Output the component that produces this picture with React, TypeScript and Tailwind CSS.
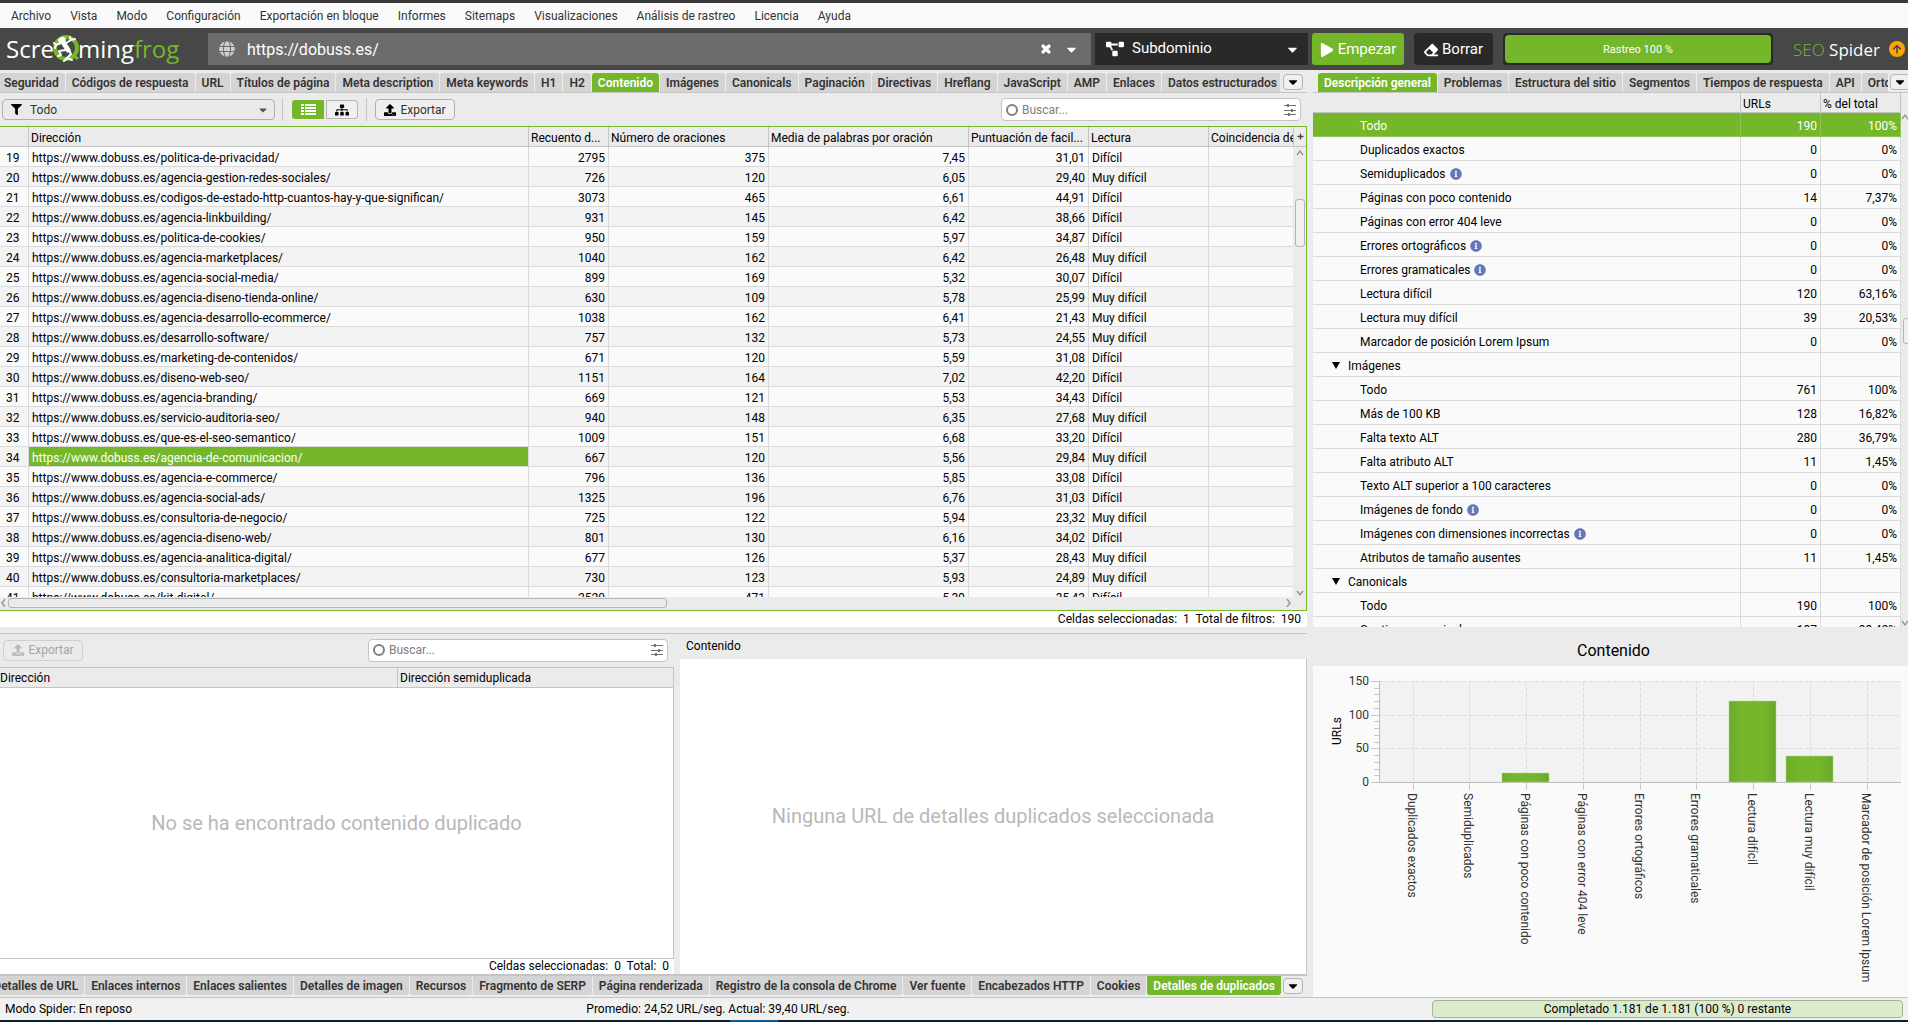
import React from "react";
import {
  FaGlobe,
  FaProjectDiagram,
  FaPlay,
  FaEraser,
  FaFilter,
  FaThList,
  FaSitemap,
  FaUpload,
  FaInfoCircle,
  FaTimes,
  FaCaretDown,
  FaPlus,
  FaArrowUp,
} from "react-icons/fa";

const menus = ["Archivo", "Vista", "Modo", "Configuración", "Exportación en bloque", "Informes", "Sitemaps", "Visualizaciones", "Análisis de rastreo", "Licencia", "Ayuda"];

const mainTabs = ["Seguridad", "Códigos de respuesta", "URL", "Títulos de página", "Meta description", "Meta keywords", "H1", "H2", "Contenido", "Imágenes", "Canonicals", "Paginación", "Directivas", "Hreflang", "JavaScript", "AMP", "Enlaces", "Datos estructurados"];

const sideTabs = ["Descripción general", "Problemas", "Estructura del sitio", "Segmentos", "Tiempos de respuesta", "API", "Ortografía"];

const detailTabs = ["Detalles de URL", "Enlaces internos", "Enlaces salientes", "Detalles de imagen", "Recursos", "Fragmento de SERP", "Página renderizada", "Registro de la consola de Chrome", "Ver fuente", "Encabezados HTTP", "Cookies", "Detalles de duplicados"];

const D = "Difícil";
const M = "Muy difícil";

const pages: [string, string, string, string, string, string][] = [
  ["politica-de-privacidad", "2795", "375", "7,45", "31,01", D],
  ["agencia-gestion-redes-sociales", "726", "120", "6,05", "29,40", M],
  ["codigos-de-estado-http-cuantos-hay-y-que-significan", "3073", "465", "6,61", "44,91", D],
  ["agencia-linkbuilding", "931", "145", "6,42", "38,66", D],
  ["politica-de-cookies", "950", "159", "5,97", "34,87", D],
  ["agencia-marketplaces", "1040", "162", "6,42", "26,48", M],
  ["agencia-social-media", "899", "169", "5,32", "30,07", D],
  ["agencia-diseno-tienda-online", "630", "109", "5,78", "25,99", M],
  ["agencia-desarrollo-ecommerce", "1038", "162", "6,41", "21,43", M],
  ["desarrollo-software", "757", "132", "5,73", "24,55", M],
  ["marketing-de-contenidos", "671", "120", "5,59", "31,08", D],
  ["diseno-web-seo", "1151", "164", "7,02", "42,20", D],
  ["agencia-branding", "669", "121", "5,53", "34,43", D],
  ["servicio-auditoria-seo", "940", "148", "6,35", "27,68", M],
  ["que-es-el-seo-semantico", "1009", "151", "6,68", "33,20", D],
  ["agencia-de-comunicacion", "667", "120", "5,56", "29,84", M],
  ["agencia-e-commerce", "796", "136", "5,85", "33,08", D],
  ["agencia-social-ads", "1325", "196", "6,76", "31,03", D],
  ["consultoria-de-negocio", "725", "122", "5,94", "23,32", M],
  ["agencia-diseno-web", "801", "130", "6,16", "34,02", D],
  ["agencia-analitica-digital", "677", "126", "5,37", "28,43", M],
  ["consultoria-marketplaces", "730", "123", "5,93", "24,89", M],
  ["kit-digital", "2520", "471", "5,39", "35,43", D],
];

type Overview = { label: string; urls?: string; pct?: string; info?: boolean; group?: boolean };

const overview: Overview[] = [
  { label: "Todo", urls: "190", pct: "100%" },
  { label: "Duplicados exactos", urls: "0", pct: "0%" },
  { label: "Semiduplicados", urls: "0", pct: "0%", info: true },
  { label: "Páginas con poco contenido", urls: "14", pct: "7,37%" },
  { label: "Páginas con error 404 leve", urls: "0", pct: "0%" },
  { label: "Errores ortográficos", urls: "0", pct: "0%", info: true },
  { label: "Errores gramaticales", urls: "0", pct: "0%", info: true },
  { label: "Lectura difícil", urls: "120", pct: "63,16%" },
  { label: "Lectura muy difícil", urls: "39", pct: "20,53%" },
  { label: "Marcador de posición Lorem Ipsum", urls: "0", pct: "0%" },
  { label: "Imágenes", group: true },
  { label: "Todo", urls: "761", pct: "100%" },
  { label: "Más de 100 KB", urls: "128", pct: "16,82%" },
  { label: "Falta texto ALT", urls: "280", pct: "36,79%" },
  { label: "Falta atributo ALT", urls: "11", pct: "1,45%" },
  { label: "Texto ALT superior a 100 caracteres", urls: "0", pct: "0%" },
  { label: "Imágenes de fondo", urls: "0", pct: "0%", info: true },
  { label: "Imágenes con dimensiones incorrectas", urls: "0", pct: "0%", info: true },
  { label: "Atributos de tamaño ausentes", urls: "11", pct: "1,45%" },
  { label: "Canonicals", group: true },
  { label: "Todo", urls: "190", pct: "100%" },
  { label: "Contiene canonical", urls: "187", pct: "98,42%" },
];

const chartData: [string, number][] = [
  ["Duplicados exactos", 0],
  ["Semiduplicados", 0],
  ["Páginas con poco contenido", 14],
  ["Páginas con error 404 leve", 0],
  ["Errores ortográficos", 0],
  ["Errores gramaticales", 0],
  ["Lectura difícil", 120],
  ["Lectura muy difícil", 39],
  ["Marcador de posición Lorem Ipsum", 0],
];

function Tab({ label, active, bottom }: { label: string; active?: boolean; bottom?: boolean }) {
  return (
    <button
      role="tab"
      aria-selected={!!active}
      className={
        "h-[19px] shrink-0 whitespace-nowrap px-1.5 text-xs leading-[21px] font-semibold " +
        (bottom ? "rounded-b-[3px] " : "rounded-t-[3px] ") +
        (active ? "bg-[#74b72b] text-white" : "bg-[#d4d4d4] text-[#333333]")
      }
    >
      {label}
    </button>
  );
}

function MoreTabs() {
  return (
    <button aria-label="Más pestañas" className="flex h-4 w-5 shrink-0 items-center justify-center rounded-[4px] border border-[#b4b4b4] bg-[#f0f0f0] text-black">
      <FaCaretDown size={14} />
    </button>
  );
}

function Sliders() {
  return (
    <svg width="12" height="12" viewBox="0 0 12 12" stroke="#6f747a" fill="#6f747a" aria-hidden="true">
      <path d="M0 1.5h12M0 6.5h12M0 10.5h12" strokeWidth="1" />
      <path d="M3 0h2v3H3zM7 5h2v3H7zM4 9h2v3H4z" stroke="none" />
    </svg>
  );
}

function SearchBox({ id, className }: { id: string; className: string }) {
  return (
    <div className={"flex h-[23px] items-center gap-1 rounded-[4px] border border-[#c4c4c4] bg-white pr-1 pl-1 " + className}>
      <span className="size-3 shrink-0 rounded-full border-2 border-[#808080]" />
      <label htmlFor={id} className="sr-only">Buscar</label>
      <input id={id} placeholder="Buscar..." className="min-w-0 flex-1 bg-transparent text-xs outline-none placeholder:text-[#7d7d7d]" />
      <button aria-label="Opciones de búsqueda"><Sliders /></button>
    </div>
  );
}

function Chevron({ d }: { d: string }) {
  return (
    <svg width="8" height="8" viewBox="0 0 8 8" fill="none" stroke="#909090" strokeWidth="1.3" className="shrink-0" aria-hidden="true">
      <path d={d} />
    </svg>
  );
}
const UP = "M1 6l3-4 3 4";
const DOWN = "M1 2l3 4 3-4";
const LEFT = "M5 0L2 4l3 4";
const RIGHT = "M2 0l3 4-3 4";

function Logo() {
  return (
    <div className="flex w-[172px] shrink-0 items-center font-['Open_Sans'] text-2xl leading-8 text-white" aria-label="Screaming Frog">
      <span>Scre</span>
      <svg width="26" height="28" viewBox="0 0 26 28" className="-mx-px shrink-0" aria-hidden="true">
        <circle cx="13" cy="13" r="11" fill="none" stroke="#74b72b" strokeWidth="4" />
        <path d="M20 20l5 4" stroke="#74b72b" strokeWidth="3" />
        <g stroke="#fff" strokeLinecap="round" strokeLinejoin="round" fill="none">
          <path d="M10 7l5 8" strokeWidth="5" />
          <path d="M8 8L3 10M3 10L1 8M3 10l-1 3M13 8l5-3M18 5l-1-3M18 5l4-1" strokeWidth="2" />
          <path d="M13 15l-7 1 2 4M8 20l-3 1M16 15l2 4-4 4M14 23l-3 3M14 23l5 2" strokeWidth="2" />
        </g>
        <ellipse cx="9" cy="5" rx="4" ry="3" fill="#fff" transform="rotate(-20 9 5)" />
      </svg>
      <span>ming</span>
      <span className="text-[#74b72b]">frog</span>
    </div>
  );
}

function Toolbar() {
  return (
    <header className="flex h-[42px] shrink-0 items-center bg-[#474747] pr-[3px] pl-[6px]">
      <Logo />
      <div className="ml-[30px] flex h-8 min-w-0 flex-1 items-center bg-[#6b6b6b] pr-3 pl-[11px] text-white">
        <FaGlobe size={16} className="shrink-0 text-[#cfcfcf]" />
        <label htmlFor="url" className="sr-only">URL para rastrear</label>
        <input id="url" defaultValue="https://dobuss.es/" className="ml-3 min-w-0 flex-1 bg-transparent pt-0.5 text-base outline-none" />
        <button aria-label="Borrar URL"><FaTimes size={12} stroke="currentColor" strokeWidth={50} /></button>
        <button aria-label="URL recientes" className="ml-3"><FaCaretDown size={15} /></button>
      </div>
      <div className="relative ml-1 flex h-8 w-[213px] shrink-0 items-center bg-[#292929] pr-2 pl-[11px] text-white">
        <FaProjectDiagram size={18} className="shrink-0" />
        <label htmlFor="scope" className="sr-only">Alcance del rastreo</label>
        <select id="scope" className="ml-2 min-w-0 flex-1 appearance-none bg-transparent text-[15px] outline-none">
          <option>Subdominio</option>
        </select>
        <FaCaretDown size={15} className="pointer-events-none shrink-0" />
      </div>
      <button className="ml-1 flex h-8 w-[92px] shrink-0 items-center justify-center gap-1 rounded-[3px] bg-[#74b72b] pt-0.5 text-[15px] text-white">
        <FaPlay size={14} /> Empezar
      </button>
      <button className="ml-2.5 flex h-8 w-[79px] shrink-0 items-center justify-center gap-1 rounded-[3px] bg-[#292929] pt-0.5 text-[15px] text-white">
        <FaEraser size={14} /> Borrar
      </button>
      <div className="ml-2.5 flex h-8 w-[270px] shrink-0 items-stretch rounded-[4px] bg-[#292929] p-0.5">
        <div role="progressbar" aria-valuenow={100} aria-label="Rastreo" className="flex flex-1 items-center justify-center rounded-[4px] bg-[#74b72b] pt-0.5 text-[11px] text-white">
          Rastreo 100 %
        </div>
      </div>
      <div className="ml-5 w-[96px] shrink-0 pt-0.5 font-['Open_Sans'] text-[17px] whitespace-nowrap text-white">
        <span className="font-light text-[#74b72b]">SEO</span> Spider
      </div>
      <button aria-label="Actualización disponible" className="flex size-4 shrink-0 items-center justify-center rounded-full bg-[#ffa500] text-[#474747]">
        <FaArrowUp size={10} />
      </button>
    </header>
  );
}

const th = "border-r border-b border-[#c4c4c4] pt-0.5 px-0.5 text-left font-normal whitespace-nowrap overflow-hidden ";
const td = "border-r border-b border-[#d9d9d9] pt-0.5 whitespace-nowrap overflow-hidden ";

function PagesTable() {
  return (
    <div className="flex min-h-0 flex-1 flex-col border-t border-r border-b border-[#74b72b] bg-[#ebebeb]">
      <div className="flex min-h-0 flex-1">
        <div className="min-w-0 flex-1 overflow-hidden">
          <table className="w-full table-fixed border-separate border-spacing-0 text-xs">
            <colgroup>
              <col className="w-[29px]" />
              <col className="w-[500px]" />
              <col className="w-20" />
              <col className="w-40" />
              <col className="w-[200px]" />
              <col className="w-[120px]" />
              <col className="w-[120px]" />
              <col />
            </colgroup>
            <thead>
              <tr className="h-5 bg-[#ebebeb]">
                <th className={th} aria-label="Fila" />
                <th className={th}>Dirección</th>
                <th className={th}>Recuento d...</th>
                <th className={th}>Número de oraciones</th>
                <th className={th}>Media de palabras por oración</th>
                <th className={th}>Puntuación de facil...</th>
                <th className={th}>Lectura</th>
                <th className="overflow-hidden border-b border-[#c4c4c4] pt-0.5 pl-0.5 text-left font-normal whitespace-nowrap">Coincidencia de</th>
              </tr>
            </thead>
            <tbody>
              {pages.map((p, i) => (
                <tr key={p[0]} className={"h-5 " + (i % 2 ? "bg-[#f3f3f3]" : "bg-[#fafafa]")}>
                  <td className={td + "pl-1.5"}>{19 + i}</td>
                  <td className={td + "pl-[3px] " + (19 + i === 34 ? "border-[#74b72b] bg-[#74b72b] text-white" : "")}>
                    https://www.dobuss.es/{p[0]}/
                  </td>
                  <td className={td + "pr-[3px] text-right"}>{p[1]}</td>
                  <td className={td + "pr-[3px] text-right"}>{p[2]}</td>
                  <td className={td + "pr-[3px] text-right"}>{p[3]}</td>
                  <td className={td + "pr-[3px] text-right"}>{p[4]}</td>
                  <td className={td + "pl-[3px]"}>{p[5]}</td>
                  <td className="border-b border-[#d9d9d9]" />
                </tr>
              ))}
            </tbody>
          </table>
        </div>
        <div className="flex w-[13px] shrink-0 flex-col items-center">
          <button aria-label="Añadir columna" className="flex h-5 w-full items-center justify-center border-b border-l border-[#c4c4c4] text-[#444444]">
            <FaPlus size={7} />
          </button>
          <div className="mt-0.5"><Chevron d={UP} /></div>
          <div className="mt-[42px] h-12 w-[10px] rounded-[3px] border border-[#b4b4b4] bg-[#f0f0f0]" />
          <div className="mt-auto"><Chevron d={DOWN} /></div>
        </div>
      </div>
      <div className="flex h-[13px] shrink-0 items-center pr-[13px]">
        <Chevron d={LEFT} />
        <div className="h-[10px] w-[51%] rounded-[3px] border border-[#b4b4b4] bg-[#ebebeb]" />
        <div className="ml-auto"><Chevron d={RIGHT} /></div>
      </div>
    </div>
  );
}

function MainPane() {
  return (
    <section className="flex min-h-0 flex-[556_1_0%] flex-col overflow-hidden">
      <div className="flex h-[23px] shrink-0 items-end gap-px border-b border-[#c4c4c4] pr-1">
        <div role="tablist" className="-ml-0.5 flex min-w-0 gap-px overflow-hidden">
          {mainTabs.map((t) => <Tab key={t} label={t} active={t === "Contenido"} />)}
        </div>
        <div className="ml-0.5 pb-0.5"><MoreTabs /></div>
      </div>
      <div className="flex h-[33px] shrink-0 items-center pr-1.5 pl-0.5">
        <div className="relative flex h-[21px] w-[273px] items-center rounded-[4px] border border-[#b0b0b0] bg-[#e9e9e9] pr-[5px] pl-2">
          <FaFilter size={11} />
          <label htmlFor="filter" className="sr-only">Filtro</label>
          <select id="filter" className="ml-2 min-w-0 flex-1 appearance-none bg-transparent text-xs text-[#333333] outline-none">
            <option>Todo</option>
          </select>
          <FaCaretDown size={12} className="pointer-events-none text-[#555555]" />
        </div>
        <div className="ml-[7px] h-[23px] border-l border-[#c4c4c4]" />
        <button aria-label="Vista de lista" className="ml-[9px] flex h-[19px] w-8 items-center justify-center rounded-l-[3px] bg-[#74b72b] text-white">
          <svg width="15" height="12" viewBox="0 0 15 12" fill="currentColor" aria-hidden="true">
            <path d="M0 0h3v2H0zM4 0h11v2H4zM0 3h3v2H0zM4 3h11v2H4zM0 6h3v2H0zM4 6h11v2H4zM0 9h3v2H0zM4 9h11v2H4z" />
          </svg>
        </button>
        <button aria-label="Vista de árbol" className="ml-0.5 flex h-[19px] w-8 items-center justify-center rounded-r-[3px] border border-[#b4b4b4] bg-[#f0f0f0] text-black">
          <FaSitemap size={14} />
        </button>
        <div className="ml-2 h-[23px] border-l border-[#c4c4c4]" />
        <button className="ml-2 flex h-[21px] w-20 items-center justify-center gap-1 rounded-[4px] border border-[#b0b0b0] bg-[#efefef] text-xs text-[#333333]">
          <FaUpload size={12} className="text-black" /> Exportar
        </button>
        <SearchBox id="search-main" className="ml-auto w-[300px]" />
      </div>
      <PagesTable />
      <div className="h-4 shrink-0 bg-white pr-1.5 text-right text-xs leading-4 whitespace-pre">Celdas seleccionadas:  1  Total de filtros:  190</div>
    </section>
  );
}

function DetailPane() {
  return (
    <section className="flex min-h-0 flex-[370_1_0%] flex-col overflow-hidden">
      <div className="mt-1.5 flex min-h-0 flex-1 border-t border-b-2 border-[#c4c4c4]">
        <div className="flex min-w-0 flex-[674_1_0%] flex-col">
          <div className="flex h-[33px] shrink-0 items-center justify-between pr-1.5 pl-[3px]">
            <button disabled className="flex h-[21px] w-20 items-center justify-center gap-1 rounded-[4px] border border-[#cfcfcf] text-xs text-[#a3a3a3]">
              <FaUpload size={12} className="text-[#bcbcbc]" /> Exportar
            </button>
            <SearchBox id="search-duplicates" className="w-[300px]" />
          </div>
          <div className="flex min-h-0 flex-1 flex-col border-t border-r border-b border-[#c4c4c4] bg-white">
            <table className="w-full table-fixed border-separate border-spacing-0 text-xs">
              <colgroup>
                <col className="w-[398px]" />
                <col />
              </colgroup>
              <thead>
                <tr className="h-5 bg-[#ebebeb]">
                  <th className="border-r border-b border-[#c4c4c4] pt-0.5 text-left font-normal">Dirección</th>
                  <th className="border-b border-[#c4c4c4] pt-0.5 pl-0.5 text-left font-normal">Dirección semiduplicada</th>
                </tr>
              </thead>
            </table>
            <p className="flex flex-1 items-center justify-center text-xl text-[#b8b8b8]">No se ha encontrado contenido duplicado</p>
          </div>
          <div className="h-[15px] shrink-0 bg-white pr-[5px] text-right text-xs leading-[15px] whitespace-pre">Celdas seleccionadas:  0  Total:  0</div>
        </div>
        <div className="ml-1.5 flex min-w-0 flex-[627_1_0%] flex-col">
          <h2 className="h-[25px] shrink-0 pl-1.5 text-xs leading-[25px]">Contenido</h2>
          <p className="flex flex-1 items-center justify-center border-r border-[#c4c4c4] bg-white text-xl text-[#b8b8b8]">Ninguna URL de detalles duplicados seleccionada</p>
        </div>
      </div>
      <div className="flex h-[21px] shrink-0 items-start gap-0.5 pr-1">
        <div role="tablist" className="flex min-w-0 flex-1 justify-end gap-px overflow-hidden">
          {detailTabs.map((t) => <Tab key={t} label={t} bottom active={t === "Detalles de duplicados"} />)}
        </div>
        <div className="pt-0.5"><MoreTabs /></div>
      </div>
    </section>
  );
}

function OverviewPane() {
  return (
    <section className="flex min-h-0 flex-[556_1_0%] flex-col overflow-hidden">
      <div className="flex h-[23px] shrink-0 items-end border-b border-[#c4c4c4]">
        <div role="tablist" className="ml-[5px] flex min-w-0 flex-1 gap-px overflow-hidden">
          {sideTabs.map((t) => <Tab key={t} label={t} active={t === "Descripción general"} />)}
        </div>
        <div className="-mr-0.5 ml-0.5 pb-0.5"><MoreTabs /></div>
      </div>
      <div className="flex min-h-0 flex-1">
        <div className="min-w-0 flex-1 overflow-hidden">
          <table className="w-full table-fixed border-separate border-spacing-0 text-xs">
            <colgroup>
              <col />
              <col className="w-20" />
              <col className="w-20" />
            </colgroup>
            <thead>
              <tr className="h-5">
                <th className={th} aria-label="Elemento" />
                <th className={th}>URLs</th>
                <th className={th}>% del total</th>
              </tr>
            </thead>
            <tbody>
              {overview.map((o, i) => {
                const cell = i === 0 ? "border-r border-b border-[#8fc455] pt-0.5 " : td;
                return (
                  <tr key={i} className={"h-6 " + (i === 0 ? "bg-[#74b72b] text-white" : "bg-[#fafafa]")}>
                    <td className={cell + (o.group ? "pl-[19px]" : "pl-[47px]")}>
                      <span className="flex items-center">
                        {o.group && (
                          <svg width="8" height="7" viewBox="0 0 8 7" className="mr-2 shrink-0" aria-hidden="true">
                            <path d="M0 0h8L4 7z" />
                          </svg>
                        )}
                        {o.label}
                        {o.info && <FaInfoCircle size={12} className="ml-1 shrink-0 text-[#6477bd]" />}
                      </span>
                    </td>
                    <td className={cell + "pr-[3px] text-right"}>{o.urls}</td>
                    <td className={cell + "pr-[3px] text-right"}>{o.pct}</td>
                  </tr>
                );
              })}
            </tbody>
          </table>
        </div>
        <div className="flex w-[7px] shrink-0 flex-col overflow-hidden pt-5">
          <Chevron d={UP} />
          <div className="mt-[197px] ml-0.5 h-[26px] w-[10px] rounded-[3px] border border-[#b4b4b4] bg-[#f0f0f0]" />
          <div className="mt-auto"><Chevron d={DOWN} /></div>
        </div>
      </div>
    </section>
  );
}

function Chart() {
  const left = 66;
  const right = 588;
  const base = 116;
  const top = 15;
  const xOf = (i: number) => Math.round(99.7 + i * 56.75);
  const yOf = (v: number) => Math.round(base - (v * (base - top)) / 150);
  const minor = Array.from({ length: 16 }, (_, i) => i * 10);
  return (
    <section className="flex min-h-0 flex-[370_1_0%] flex-col">
      <h2 className="h-[39px] shrink-0 pl-1.5 text-center text-base leading-[47px]">Contenido</h2>
      <div className="min-h-0 flex-1 overflow-hidden bg-[#fafafa]">
        <svg width="595" height="331" viewBox="0 0 595 331" fontFamily="Roboto, sans-serif" fill="#333" role="img" aria-label="Contenido por filtro">
          <defs>
            <linearGradient id="bar">
              <stop offset="0" stopColor="#6dac29" />
              <stop offset="0.3" stopColor="#74b72b" />
              <stop offset="0.7" stopColor="#74b72b" />
              <stop offset="1" stopColor="#6aa828" />
            </linearGradient>
          </defs>
          <rect x={left} y={top} width={right - left} height={base - top} fill="#f2f2f2" />
          <g stroke="#dcdcdc" strokeDasharray="4 2" fill="none">
            {[50, 100, 150].map((v) => <path key={v} d={`M${left} ${yOf(v) + 0.5}H${right}`} />)}
            {chartData.map((c, i) => <path key={c[0]} d={`M${xOf(i) + 0.5} ${top}V${base}`} />)}
          </g>
          <g stroke="#c8c8c8" fill="none">
            {minor.map((v) => <path key={v} d={`M${v % 50 ? left - 5 : left - 8} ${yOf(v) + 0.5}H${left}`} />)}
            {chartData.map((c, i) => <path key={c[0]} d={`M${xOf(i) + 0.5} ${base}v8`} />)}
            <path d={`M${left + 0.5} ${top}V${base + 0.5}H${right}`} stroke="#bcbcbc" />
          </g>
          {chartData.map((c, i) =>
            c[1] > 0 ? (
              <rect key={c[0]} x={xOf(i) - 24} y={yOf(c[1])} width="47" height={base - yOf(c[1])} fill="url(#bar)" stroke="#b4d78c" strokeWidth="0.5" />
            ) : null
          )}
          <g fontSize="12" textAnchor="end">
            {[0, 50, 100, 150].map((v) => <text key={v} x={left - 10} y={yOf(v) + 4}>{v}</text>)}
          </g>
          <text transform="translate(28 65) rotate(-90)" fontSize="12" textAnchor="middle" fill="#000">URLs</text>
          <g fontSize="12">
            {chartData.map((c, i) => (
              <text key={c[0]} transform={`translate(${xOf(i) - 5} 127) rotate(90)`}>{c[0]}</text>
            ))}
          </g>
        </svg>
      </div>
    </section>
  );
}

export default function App() {
  return (
    <div className="flex h-screen flex-col overflow-hidden border-t-[3px] border-[#3a3a3a] bg-[#ebebeb] font-['Roboto',sans-serif] text-xs text-black">
      <nav className="flex h-[25px] shrink-0 items-center gap-[19px] bg-[#fafafa] pl-[11px] text-[#333333]">
        {menus.map((m) => <button key={m}>{m}</button>)}
      </nav>
      <Toolbar />
      <main className="flex min-h-0 flex-1">
        <div className="flex min-w-0 flex-1 flex-col">
          <MainPane />
          <DetailPane />
        </div>
        <aside className="ml-1.5 flex w-[595px] shrink-0 flex-col">
          <OverviewPane />
          <Chart />
        </aside>
      </main>
      <footer className="grid h-[23px] shrink-0 grid-cols-[1fr_auto_1fr] items-center border-t border-[#c4c4c4] bg-[#f1f1f1] pr-[5px] pl-[5px]">
        <span>Modo Spider: En reposo</span>
        <span className="mr-[472px]">Promedio: 24,52 URL/seg. Actual: 39,40 URL/seg.</span>
        <div className="h-[18px] w-[471px] justify-self-end rounded-[4px] border border-[#a3b58e] bg-[#dcebcd] text-center leading-[17px]">Completado 1.181 de 1.181 (100 %) 0 restante</div>
      </footer>
      <div className="h-0.5 shrink-0 bg-[#0b2230] pl-[730px]"><div className="h-full w-12 bg-[#0a5a96]" /></div>
    </div>
  );
}
